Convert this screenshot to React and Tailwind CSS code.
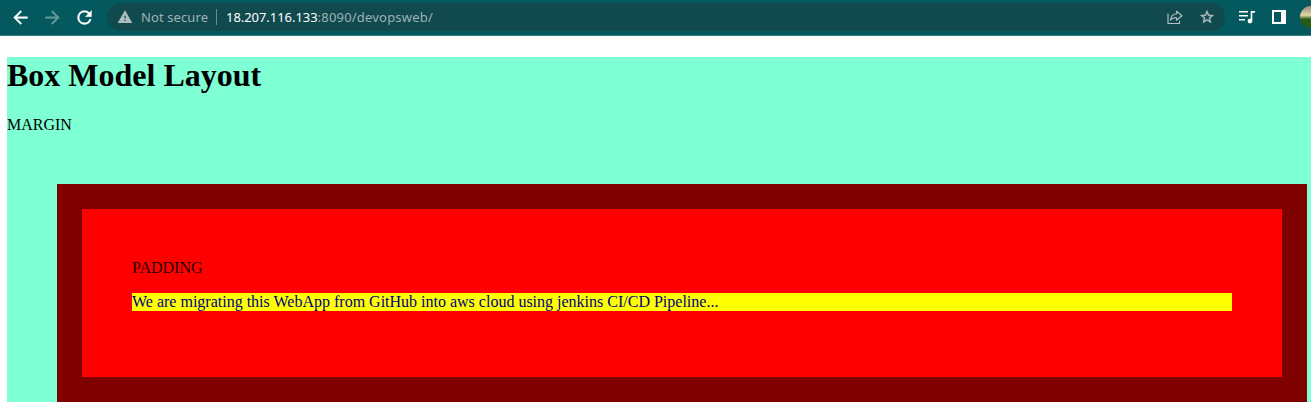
function Toolbar() {
  return (
    <header className="flex h-9 items-start border-b border-[#367d80] bg-[#04595e] font-['Noto_Sans','Open_Sans',sans-serif] text-[13px]">
      <nav className="flex h-[34px] w-[107px] shrink-0 items-center gap-[11px] pl-[10px] text-white">
        <svg width="21" height="21" viewBox="0 0 24 24" fill="currentColor" stroke="currentColor" strokeWidth="0.4"><path d="M20 11H7.83l5.59-5.59L12 4l-8 8 8 8 1.41-1.41L7.83 13H20v-2z" /></svg>
        <svg className="text-[#65969a]" width="21" height="21" viewBox="0 0 24 24" fill="currentColor" stroke="currentColor" strokeWidth="0.4"><path d="m12 4-1.41 1.41L16.17 11H4v2h12.17l-5.58 5.59L12 20l8-8z" /></svg>
        <svg width="21" height="21" viewBox="0 0 24 24" fill="currentColor" stroke="currentColor" strokeWidth="0.4"><path d="M17.65 6.35A7.96 7.96 0 0 0 12 4a8 8 0 1 0 7.73 10h-2.08A6 6 0 1 1 12 6c1.66 0 3.14.69 4.22 1.78L13 11h7V4l-2.35 2.35z" /></svg>
      </nav>
      <div className="mt-[3px] flex h-7 w-[1118px] shrink-0 items-center rounded-full bg-[#10494e] pl-[10px]">
        <svg className="text-[#b0bdbf]" width="16" height="16" viewBox="0 0 24 24" fill="currentColor"><path d="M1 21h22L12 2 1 21zm12-3h-2v-2h2v2zm0-4h-2v-4h2v4z" /></svg>
        <span className="ml-2 w-[75px] whitespace-nowrap tracking-[0.1px] text-[#a0b1b3]">Not secure</span>
        <span className="h-4 w-px bg-[#70898c]" />
        <span className="ml-[9px] whitespace-nowrap tracking-[0.2px] text-[#9db2b4]"><span className="tracking-[-0.05px] text-white">18.207.116.133</span>:8090/devopsweb/</span>
        <div className="ml-auto mr-[10px] flex items-center gap-4 text-[#b5c1c2]">
          <svg width="16" height="16" viewBox="0 0 16 16" fill="none" stroke="currentColor" strokeWidth="1.15" strokeLinejoin="round"><path d="M1 4.5v10h11.5v-2.7M9.5 2.2 15 6.7l-5.5 4.5V8.7C6.5 8.5 5 9.4 3.4 11.2c.4-3.6 2.4-6 6.1-6.4z" /></svg>
          <svg width="16" height="16" viewBox="0 0 24 24" fill="currentColor" stroke="currentColor" strokeWidth="0.6"><path d="m22 9.24-7.19-.62L12 2 9.19 8.63 2 9.24l5.46 4.73L5.82 21 12 17.27 18.18 21l-1.63-7.03L22 9.24zM12 15.4l-3.76 2.27 1-4.28-3.32-2.88 4.38-.38L12 6.1l1.71 4.04 4.38.38-3.32 2.88 1 4.28L12 15.4z" /></svg>
        </div>
      </div>
      <div className="flex h-[34px] flex-1 items-center overflow-hidden pl-[14px] text-white">
        <svg className="shrink-0" width="16" height="14" viewBox="0 0 16 14" fill="currentColor"><path d="M0 1h9v1.6H0zM0 5h9v1.6H0zM0 9h6v1.6H0zM11 1h5v1.8h-2.7v8.2a2.35 2.35 0 1 1-2.3-2.3c.3 0 .5 0 .7.1V1z" /></svg>
        <svg className="ml-[17px] shrink-0" width="14" height="14" viewBox="0 0 14 14" fill="currentColor"><path fillRule="evenodd" d="M0 0h14v14H0zM2 2v10h7V2z" /></svg>
        <span className="ml-[14px] size-[22px] shrink-0 rounded-full bg-linear-to-b from-[#a99b87] from-10% via-[#e4d7a5] via-42% to-[#285c16] to-60%" />
      </div>
    </header>
  );
}

export default function App() {
  return (
    <div className="h-[405px] overflow-hidden bg-white font-['Liberation_Serif',serif] text-base leading-[18px] text-black">
      <Toolbar />
      <main className="ml-[7px] mt-[21px] h-[345px] bg-[#7fffd4]">
        <h1 className="text-[32px] font-bold leading-[37px]">Box Model Layout</h1>
        <p className="mt-[22px]">MARGIN</p>
        <section className="ml-[50px] mt-[50px] h-[218px] w-[1250px] border-[25px] border-[#800000] bg-[#ff0000] px-[50px] pt-[50px]">
          <p className="text-[#260000]">PADDING</p>
          <p className="mt-4 bg-[#ffff00] text-[#000080]">We are migrating this WebApp from GitHub into aws cloud using jenkins CI/CD Pipeline...</p>
        </section>
      </main>
    </div>
  );
}
